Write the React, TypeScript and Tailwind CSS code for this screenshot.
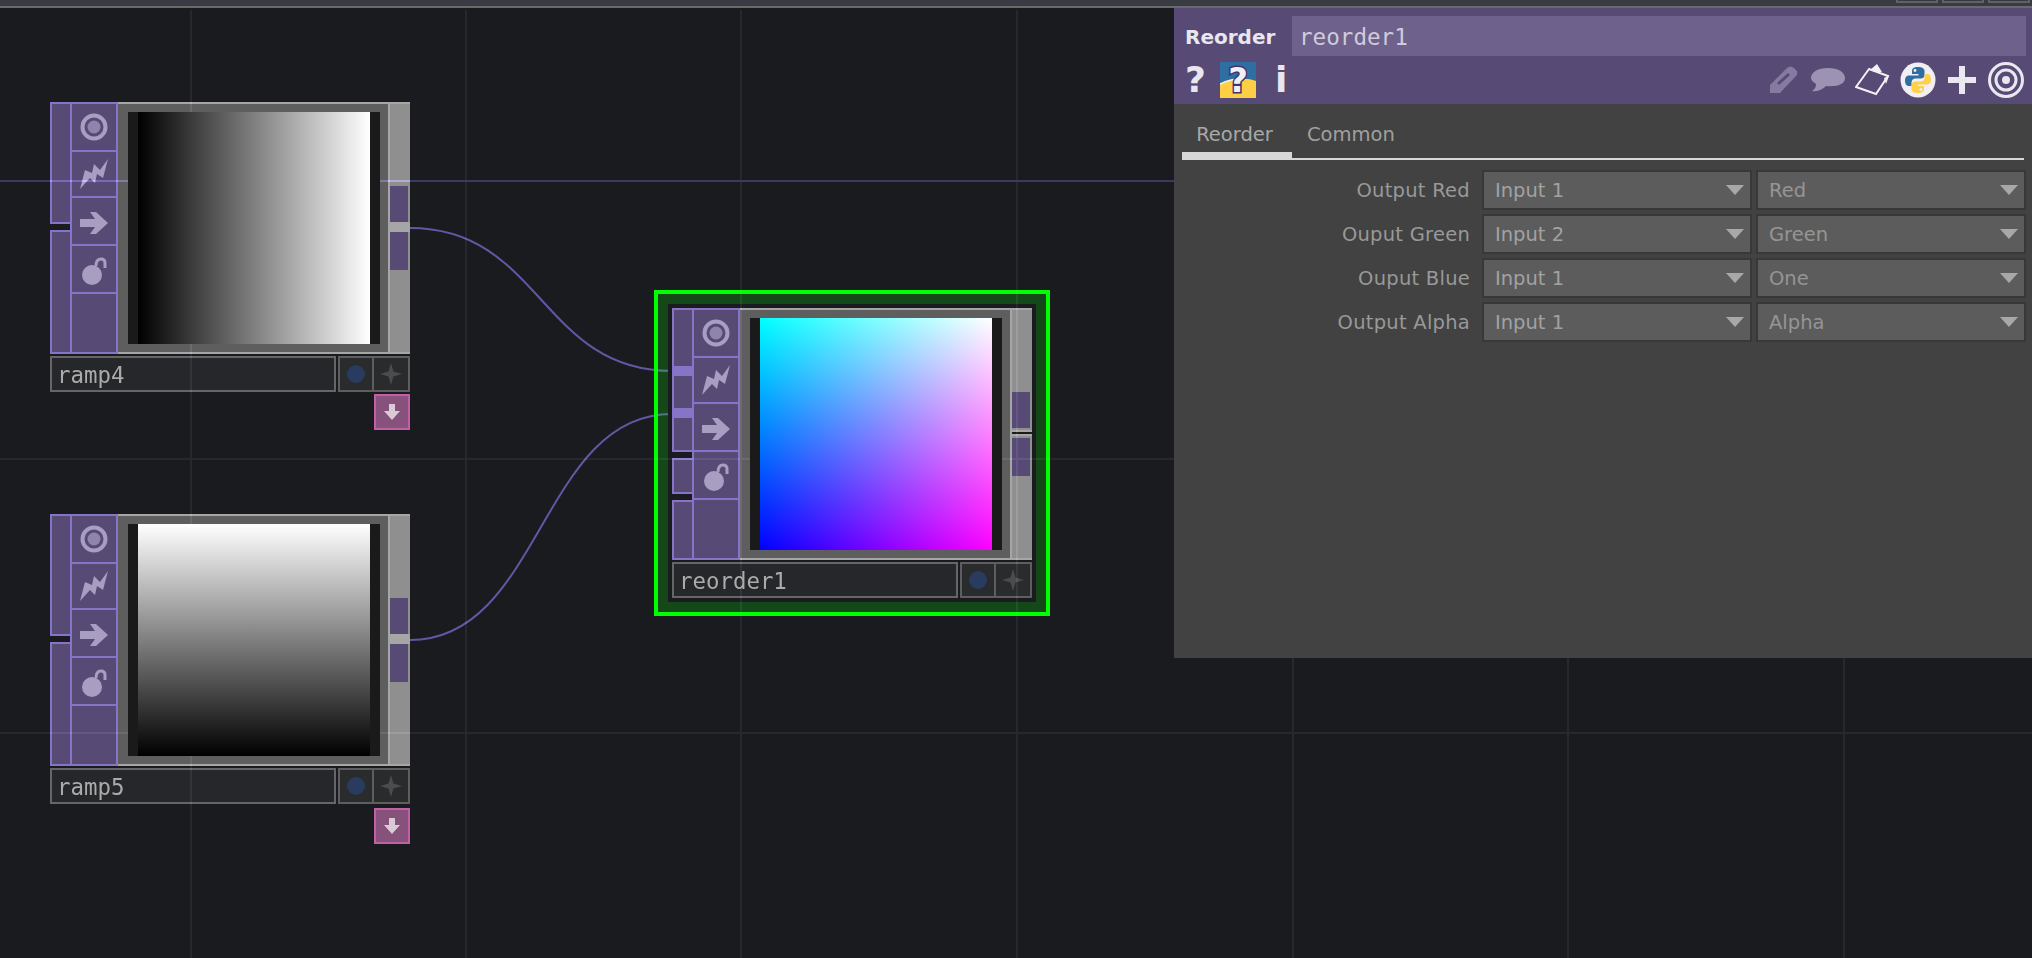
import React from "react";

const VERTICALS = [190, 465, 740, 1016, 1292, 1567, 1843];
const HORIZONTALS = [458, 732];

function RingIcon() {
  return (
    <svg width="28" height="28" viewBox="0 0 28 28">
      <circle cx="14" cy="14" r="11.5" fill="none" stroke="#a89ec2" strokeWidth="4" />
      <circle cx="14" cy="14" r="6.5" fill="#8f84ad" />
    </svg>
  );
}
function BoltIcon() {
  return (
    <svg width="28" height="30" viewBox="0 0 28 30">
      <path d="M28 0 L23 19 L17 15 L15 24 L10 19 L0 30 L5 11 L12 14 L14 5 L20 11 Z" fill="#a89ec2" />
    </svg>
  );
}
function ArrowIcon() {
  return (
    <svg className="mt-[4px]" width="28" height="22" viewBox="0 0 28 22">
      <path d="M0 7 H15 L10 0 H16 L28 11 L16 22 H10 L15 15 H0 Z" fill="#a89ec2" />
    </svg>
  );
}
function LockIcon() {
  return (
    <svg className="mt-[4px]" width="25" height="28" viewBox="0 0 25 28">
      <circle cx="10" cy="18" r="10" fill="#a89ec2" />
      <path d="M14 9 Q14 2 19 2 Q23 2 23 6 V11" fill="none" stroke="#a89ec2" strokeWidth="3" />
    </svg>
  );
}

function IconCell({ className, children }: { className: string; children?: React.ReactNode }) {
  return <div className={`flex items-center justify-center border-b-2 border-[#8674c8] ${className}`}>{children}</div>;
}

type NodeProps = {
  name: string;
  picture: string;
  inputs: { h: string; marks?: boolean }[];
  selected?: boolean;
  pink?: string;
};

function OpNode({ name, picture, inputs, selected, pink }: NodeProps) {
  return (
    <div className="w-[360px]">
      <div className="flex h-[252px]">
        <div className="flex w-[20px] flex-col gap-[6px]">
          {inputs.map((input, i) => (
            <div key={i} className={`${input.h} border-2 border-r-0 border-[#8674c8] bg-[#574a75]`}>
              {input.marks ? (
                <div className="flex flex-col">
                  <div className="mt-[56px] h-[10px] bg-[#8674c8]" />
                  <div className="mt-[32px] h-[10px] bg-[#8674c8]" />
                </div>
              ) : null}
            </div>
          ))}
        </div>
        <div className="flex w-[48px] flex-col border-2 border-[#8674c8] bg-[#574a75]">
          <IconCell className="h-[48px]"><RingIcon /></IconCell>
          <IconCell className="h-[46px]"><BoltIcon /></IconCell>
          <IconCell className="h-[48px]"><ArrowIcon /></IconCell>
          <IconCell className="h-[48px]"><LockIcon /></IconCell>
        </div>
        <div className="w-[270px] border-y-2 border-[#a6a6a6] bg-[#5e5e5e] pt-[8px] pl-[10px]">
          <div className="relative z-10 h-[232px] w-[252px] bg-[#1a1a1a] pl-[10px]">
            <div className={`h-[232px] w-[232px] ${picture}`} />
          </div>
        </div>
        <div className="flex w-[22px] flex-col border-y-2 border-l-2 border-[#a6a6a6] bg-[#8f8f8f]">
          <div className="mt-[82px] mr-[2px] h-[36px] bg-[#574a75]" />
          {selected ? (
            <div className="my-[2px] h-[6px] border-y-2 border-[#a6a6a6] bg-[#1a1b1f]" />
          ) : (
            <div className="h-[10px] bg-[#a6a6a6]" />
          )}
          <div className="mr-[2px] h-[38px] bg-[#574a75]" />
        </div>
      </div>
      <div className="mt-[2px] flex h-[36px] gap-[2px]">
        <div className="flex w-[286px] items-center border-2 border-[#666666] bg-[#26272a] pt-[2px] pl-[5px] font-['DejaVu_Sans_Mono'] text-[22.4px] leading-none text-[#ababab]">
          {name}
        </div>
        <div className="flex w-[72px] border-2 border-[#5e5e5e] bg-[#2a2b2d]">
          <div className="flex w-[34px] items-center justify-center border-r-2 border-[#5e5e5e]">
            <div className="h-[18px] w-[18px] rounded-full bg-[#293c5f]" />
          </div>
          <div className="flex flex-1 items-center justify-center">
            <svg width="22" height="22" viewBox="0 0 22 22">
              <path d="M11 0 L13.5 8.5 L22 11 L13.5 13.5 L11 22 L8.5 13.5 L0 11 L8.5 8.5 Z" fill="#4c4c4c" />
            </svg>
          </div>
        </div>
      </div>
      {pink ? (
        <div className={`flex justify-end ${pink}`}>
          <div className="flex h-[36px] w-[36px] items-center justify-center border-2 border-[#c35fa5] bg-[#86517a]">
            <svg width="18" height="18" viewBox="0 0 18 18">
              <path d="M6 1 H12 V8 H17 L9 17 L1 8 H6 Z" fill="#d8cbd6" />
            </svg>
          </div>
        </div>
      ) : null}
    </div>
  );
}

function PythonIcon() {
  const blue = "M18 5 C13 5 12 7 12 9 V12 H18.5 V13.5 H9 C6 13.5 5 16 5 18.5 C5 21.5 6 24 9 24 H11.5 V20.5 C11.5 18 13.5 16.5 15.5 16.5 H21 C23 16.5 24.5 15 24.5 13 V9 C24.5 6.5 22 5 18 5Z";
  return (
    <svg width="36" height="36" viewBox="0 0 36 36">
      <circle cx="18" cy="18" r="17.5" fill="#f1eff4" />
      <path d={blue} fill="#2f6ea3" />
      <path d={blue} fill="#fdd24a" transform="rotate(180 18 18)" />
      <circle cx="15" cy="8.5" r="1.4" fill="#f1eff4" />
      <circle cx="21" cy="27.5" r="1.4" fill="#f1eff4" />
    </svg>
  );
}

function HeaderIcons() {
  return (
    <div className="flex h-[48px] items-center pl-[11px] pr-[8px] font-['DejaVu_Sans'] text-[#e8e6ee]">
      <span className="w-[35px] text-[36px] leading-none font-bold">?</span>
      <div className="relative flex h-[36px] w-[36px] items-center justify-center">
        <svg className="absolute inset-0" width="36" height="36" viewBox="0 0 36 36">
          <rect width="36" height="36" fill="#2f6ea3" />
          <path d="M0 22 Q10 17 20 17 Q28 16 36 19 V36 H0 Z" fill="#fdcf45" />
          <path d="M0 22 Q10 17 20 17" fill="none" stroke="#f4f2ee" strokeWidth="1.5" />
        </svg>
        <span className="relative text-[34px] leading-[36px] font-bold text-[#f1eff6] [paint-order:stroke] [-webkit-text-stroke:3px_#40356a]">?</span>
      </div>
      <span className="ml-[19px] text-[36px] leading-none font-bold">i</span>
      <div className="ml-auto flex items-center">
        <svg width="28" height="28" viewBox="0 0 28 28">
          <path d="M0 19 L17 2 Q20 -1 24 2 L27 5 Q28 8 26 10 L10 27 H0 Z" fill="#857a9f" />
          <path d="M7 17 L18 7 L20 9 L9 19 Z" fill="#574a75" />
        </svg>
        <svg className="ml-[13px]" width="34" height="24" viewBox="0 0 34 24">
          <path d="M17 0 C27 0 34 4 34 10 C34 16 27 19 15 18 C12 21 7 24 1 23 C4 21 5 19 5 16 C2 14 0 12 0 10 C0 4 7 0 17 0Z" fill="#9c93b4" />
        </svg>
        <svg className="ml-[10px]" width="35" height="32" viewBox="0 0 35 32">
          <path d="M14 5 L1 23 L21 30 L33 12 Z" fill="none" stroke="#f3f1f7" strokeWidth="2" />
          <path d="M15 6 L22 0 L27 8 L20 8 Z M29 14 L34 12 L31 20 Z" fill="#f3f1f7" />
        </svg>
        <div className="ml-[10px] flex"><PythonIcon /></div>
        <svg className="ml-[12px]" width="28" height="28" viewBox="0 0 28 28">
          <path d="M11 0 H17 V11 H28 V17 H17 V28 H11 V17 H0 V11 H11 Z" fill="#e9e7ef" />
        </svg>
        <svg className="ml-[12px]" width="36" height="36" viewBox="0 0 36 36">
          <circle cx="18" cy="18" r="16.5" fill="none" stroke="#e9e7ef" strokeWidth="3" />
          <circle cx="18" cy="18" r="10" fill="none" stroke="#e9e7ef" strokeWidth="3" />
          <circle cx="18" cy="18" r="4" fill="#e9e7ef" />
        </svg>
      </div>
    </div>
  );
}

function Select({ value, width, textColor }: { value: string; width: string; textColor: string }) {
  return (
    <div className={`flex h-[40px] items-center justify-between border-2 border-[#383838] bg-[#5c5c5c] pr-[6px] pl-[11px] ${width} ${textColor}`}>
      <span className="pt-[2px]">{value}</span>
      <svg width="18" height="10" viewBox="0 0 18 10">
        <path d="M0 0 H18 L9 10 Z" fill="#a8a8a8" />
      </svg>
    </div>
  );
}

const ROWS = [
  ["Output Red", "Input 1", "Red"],
  ["Ouput Green", "Input 2", "Green"],
  ["Ouput Blue", "Input 1", "One"],
  ["Output Alpha", "Input 1", "Alpha"],
];

function ParamPanel() {
  return (
    <div className="absolute top-0 right-0 z-20 h-[650px] w-[858px] bg-[#424242] font-['DejaVu_Sans'] text-[19.5px] leading-none">
      <div className="h-[96px] bg-[#574a75]">
        <div className="flex h-[48px] items-end pr-[6px]">
          <div className="flex h-[40px] w-[118px] items-center pt-[1px] pl-[11px] text-[20px] font-bold text-[#e8e6ee]">Reorder</div>
          <div className="flex h-[40px] flex-1 items-center bg-[#6e618c] pt-[3px] pl-[7px] font-['DejaVu_Sans_Mono'] text-[22.6px] text-[#d0cbdc]">
            reorder1
          </div>
        </div>
        <HeaderIcons />
      </div>
      <div className="mx-[8px] flex h-[56px] items-end border-b-2 border-[#d8d8d8] text-[#a8a8a8]">
        <div className="flex h-[54px] w-[110px] items-center justify-center border-b-[6px] border-[#d8d8d8] pt-[14px] pr-[5px]">Reorder</div>
        <div className="flex h-[54px] items-center border-b-[6px] border-transparent pt-[14px] pl-[15px] text-[#a0a0a0]">Common</div>
      </div>
      <div className="mt-[10px] flex flex-col gap-[4px]">
        {ROWS.map(([label, a, b]) => (
          <div key={label} className="flex items-center">
            <div className="w-[296px] pt-[2px] text-right tracking-[0.25px] text-[#999999]">{label}</div>
            <div className="ml-[12px] flex gap-[4px]">
              <Select value={a} width="w-[270px]" textColor="text-[#a2a2a2]" />
              <Select value={b} width="w-[270px]" textColor="text-[#959595]" />
            </div>
          </div>
        ))}
      </div>
    </div>
  );
}

export default function App() {
  return (
    <div className="flex h-[958px] w-[2032px] flex-col overflow-hidden bg-[#1a1b1f]">
      <div className="flex h-[8px] shrink-0 justify-end gap-[4px] border-b-2 border-[#6a6a6a] bg-[#383b42] pr-[2px]">
        <div className="h-[3px] w-[42px] border-2 border-t-0 border-[#5f6166]" />
        <div className="h-[3px] w-[42px] border-2 border-t-0 border-[#5f6166]" />
        <div className="h-[3px] w-[42px] border-2 border-t-0 border-[#5f6166]" />
      </div>
      <div className="relative isolate flex-1 bg-[#1a1b1f]">
        <svg className="absolute inset-0" width="2032" height="950" viewBox="0 0 2032 950">
          <path d="M410 220 C541 220 541 363 672 363" fill="none" stroke="#6456a4" strokeWidth="2" />
          <path d="M410 632 C541 632 541 406 672 406" fill="none" stroke="#6456a4" strokeWidth="2" />
        </svg>

        <div className="absolute top-[94px] left-[50px]">
          <OpNode
            name="ramp4"
            picture="bg-[linear-gradient(to_right,#000,#fff)]"
            inputs={[{ h: "h-[122px]" }, { h: "h-[124px]" }]}
            pink="mt-[2px]"
          />
        </div>
        <div className="absolute top-[506px] left-[50px]">
          <OpNode
            name="ramp5"
            picture="bg-[linear-gradient(to_bottom,#fff,#000)]"
            inputs={[{ h: "h-[122px]" }, { h: "h-[124px]" }]}
            pink="mt-[4px]"
          />
        </div>
        <div className="absolute top-[282px] left-[654px] border-4 border-[#00ff00] bg-[#00ff0033] p-[10px]">
          <div className="bg-[#1a1b1f] p-[4px]">
            <OpNode
              name="reorder1"
              selected
              picture="bg-[linear-gradient(to_right,#00f,#f0f),linear-gradient(to_bottom,#0f0,#000)] bg-blend-screen"
              inputs={[{ h: "h-[144px]", marks: true }, { h: "h-[36px]" }, { h: "h-[60px]" }]}
            />
          </div>
        </div>

        <div className="pointer-events-none absolute inset-0 z-[5] mix-blend-plus-lighter">
          {VERTICALS.map((x) => (
            <div key={x} className="absolute top-[2px] bottom-0 w-[2px] bg-[#0d0c10]" style={{ left: x }} />
          ))}
          {HORIZONTALS.map((y) => (
            <div key={y} className="absolute right-0 left-0 h-[2px] bg-[#0d0c10]" style={{ top: y - 8 }} />
          ))}
          <div className="absolute top-[172px] right-0 left-0 h-[2px] bg-[#231d41]" />
        </div>

        <ParamPanel />
      </div>
    </div>
  );
}
